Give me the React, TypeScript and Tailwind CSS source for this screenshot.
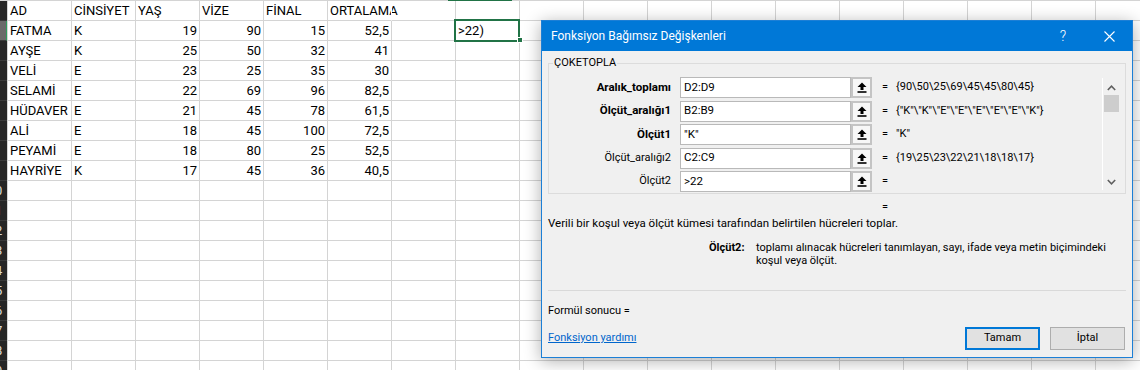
import React from "react";

const COLS = 18;
const ROWS = 19;

type Cell = string | number | undefined;
const data: Cell[][] = [
  ["AD", "CİNSİYET", "YAŞ", "VİZE", "FİNAL", "ORTALAMA"],
  ["FATMA", "K", 19, 90, 15, "52,5", undefined, ">22)"],
  ["AYŞE", "K", 25, 50, 32, "41"],
  ["VELİ", "E", 23, 25, 35, "30"],
  ["SELAMİ", "E", 22, 69, 96, "82,5"],
  ["HÜDAVER", "E", 21, 45, 78, "61,5"],
  ["ALİ", "E", 18, 45, 100, "72,5"],
  ["PEYAMİ", "E", 18, 80, 25, "52,5"],
  ["HAYRİYE", "K", 17, 45, 36, "40,5"],
];

function isRight(r: number, c: number, v: Cell) {
  if (v === undefined) return false;
  if (r === 0) return false;
  if (typeof v === "number") return true;
  return c === 5;
}

function UpRefIcon() {
  return (
    <svg width="10" height="11" viewBox="0 0 10 11">
      <path d="M5 0.5 L9.5 5 H6.5 V8 H3.5 V5 H0.5 Z" fill="#000" />
      <rect x="0.5" y="9.2" width="9" height="1.6" fill="#000" />
    </svg>
  );
}

const argRows = [
  { label: "Aralık_toplamı", bold: true, input: "D2:D9", value: "{90\\50\\25\\69\\45\\45\\80\\45}" },
  { label: "Ölçüt_aralığı1", bold: true, input: "B2:B9", value: '{"K"\\"K"\\"E"\\"E"\\"E"\\"E"\\"E"\\"K"}' },
  { label: "Ölçüt1", bold: true, input: '"K"', value: '"K"' },
  { label: "Ölçüt_aralığı2", bold: false, input: "C2:C9", value: "{19\\25\\23\\22\\21\\18\\18\\17}" },
  { label: "Ölçüt2", bold: false, input: ">22", value: "" },
];

function Dialog() {
  return (
    <div className="absolute left-[541px] top-[20px] z-20 w-[592px] h-[338px] bg-[#f0f0f0] border border-[#1c7fd6] shadow-[0_3px_16px_rgba(0,0,0,0.32)] flex flex-col font-['Roboto'] text-[11px] text-black">
      <div className="h-[30px] shrink-0 bg-[#0078d7] flex items-center text-white">
        <span className="pl-[9px] flex-1 text-[12px]">Fonksiyon Bağımsız Değişkenleri</span>
        <span className="w-[46px] text-center text-[14px] font-light">?</span>
        <span className="w-[46px] flex justify-center">
          <svg width="11" height="11" viewBox="0 0 11 11">
            <path d="M0.5 0.5 L10.5 10.5 M10.5 0.5 L0.5 10.5" stroke="#fff" strokeWidth="1.1" />
          </svg>
        </span>
      </div>
      <div className="flex-1 px-[6px] flex flex-col">
        <div className="mt-[12px] h-[131px] border border-[#dcdcdc] relative flex">
          <span className="absolute -top-[8px] left-[4px] px-[1px] bg-[#f0f0f0] leading-[14px]">ÇOKETOPLA</span>
          <div className="flex-1 flex flex-col gap-[2.5px] pt-[13px]">
            {argRows.map((a) => (
              <div key={a.label} className="flex items-center h-[21px]">
                <div className={`w-[122px] text-right whitespace-nowrap ${a.bold ? "font-bold text-[11.5px]" : ""}`}>{a.label}</div>
                <div className="ml-[9px] w-[171px] h-[21px] bg-white border border-[#b9b9b9] flex items-center pl-[3px] whitespace-nowrap text-[11.5px]">
                  {a.input}
                </div>
                <div className="w-[21px] h-[21px] border-2 border-[#c4c4c4] bg-[#f7f7f7] flex items-center justify-center">
                  <UpRefIcon />
                </div>
                <div className="ml-[10px] w-[8px]">=</div>
                <div className="ml-[6px] whitespace-nowrap">{a.value}</div>
              </div>
            ))}
          </div>
          <div className="mt-[14px] mr-[6px] w-[17px] h-[112px] border-l border-white flex flex-col items-center">
            <svg className="mt-[7px]" width="9" height="6" viewBox="0 0 9 6">
              <path d="M0.8 5 L4.5 1.2 L8.2 5" stroke="#606060" strokeWidth="1.6" fill="none" />
            </svg>
            <div className="mt-[4px] w-[15px] h-[17px] bg-[#cdcdcd]" />
            <div className="flex-1" />
            <svg className="mb-[5px]" width="9" height="6" viewBox="0 0 9 6">
              <path d="M0.8 1 L4.5 4.8 L8.2 1" stroke="#606060" strokeWidth="1.6" fill="none" />
            </svg>
          </div>
        </div>
        <div className="mt-[6px] h-[14px] leading-[14px] pl-[334px]">=</div>
        <div className="mt-[2px] leading-[14px] whitespace-nowrap text-[11.5px]">
          Verili bir koşul veya ölçüt kümesi tarafından belirtilen hücreleri toplar.
        </div>
        <div className="mt-[11px] flex leading-[13px]">
          <div className="w-[161px] shrink-0" />
          <div className="w-[47px] shrink-0 font-bold">Ölçüt2:</div>
          <div className="whitespace-nowrap">
            toplamı alınacak hücreleri tanımlayan, sayı, ifade veya metin biçimindeki
            <br />
            koşul veya ölçüt.
          </div>
        </div>
        <div className="mt-[23px] border-t border-[#d9d9d9]" />
        <div className="mt-[13px] leading-[14px]">Formül sonucu =</div>
        <div className="mt-[9px] h-[23px] flex items-center justify-between">
          <span className="text-[#0066cc] underline">Fonksiyon yardımı</span>
          <div className="flex gap-[10px] mr-[1px]">
            <div className="w-[75px] h-[23px] border-2 border-[#0078d7] bg-[#e1e1e1] flex items-center justify-center">Tamam</div>
            <div className="w-[75px] h-[23px] border border-[#adadad] bg-[#e1e1e1] flex items-center justify-center">İptal</div>
          </div>
        </div>
      </div>
    </div>
  );
}

export default function App() {
  const rows = Array.from({ length: ROWS }, (_, i) => i);
  const cols = Array.from({ length: COLS }, (_, i) => i);
  return (
    <div className="relative w-[1140px] h-[370px] overflow-hidden bg-white font-['Roboto'] text-[13px] text-black">
      {/* top line */}
      <div className="flex h-[1px]">
        <div className="w-[7px] bg-[#262626]" />
        {cols.map((c) => (
          <div key={c} className={`w-[64px] shrink-0 ${c === 7 ? "bg-[#217346]" : "bg-[#d4d4d4]"}`} />
        ))}
      </div>
      {rows.map((r) => (
        <div key={r} className="flex h-[20px]">
          <div
            className={`w-[7px] shrink-0 h-[20px] overflow-hidden border-b border-b-[#3a3a3a] ${
              r === 1 ? "bg-[#6a6a6a] border-r border-r-[#2e9b5c]" : "bg-[#262626]"
            }`}
          >
            {r >= 9 ? (
              <div className="ml-[-17px] w-[24px] h-[19px] text-center leading-[19px] text-[#dcdcdc]">{r + 1}</div>
            ) : null}
          </div>
          {cols.map((c) => {
            const v = data[r]?.[c];
            const right = isRight(r, c, v);
            const hideLeft = r === 0 && c === 6;
            return (
              <div
                key={c}
                className={`relative shrink-0 w-[64px] h-[20px] border-l border-b border-b-[#d4d4d4] ${
                  hideLeft ? "border-l-white" : "border-l-[#d4d4d4]"
                } flex items-center whitespace-nowrap leading-[19px] ${right ? "justify-end pr-[2px]" : "pl-[2px]"}`}
              >
                {v !== undefined ? <span>{v}</span> : null}
                {r === 1 && c === 7 ? (
                  <>
                    <div className="absolute -left-[2px] -top-[2px] w-[66px] h-[23px] border-2 border-[#217346] z-10" />
                    <div className="absolute left-[61px] top-[16px] w-[6px] h-[6px] bg-[#217346] border border-white z-10" />
                  </>
                ) : null}
              </div>
            );
          })}
        </div>
      ))}
      <Dialog />
    </div>
  );
}
